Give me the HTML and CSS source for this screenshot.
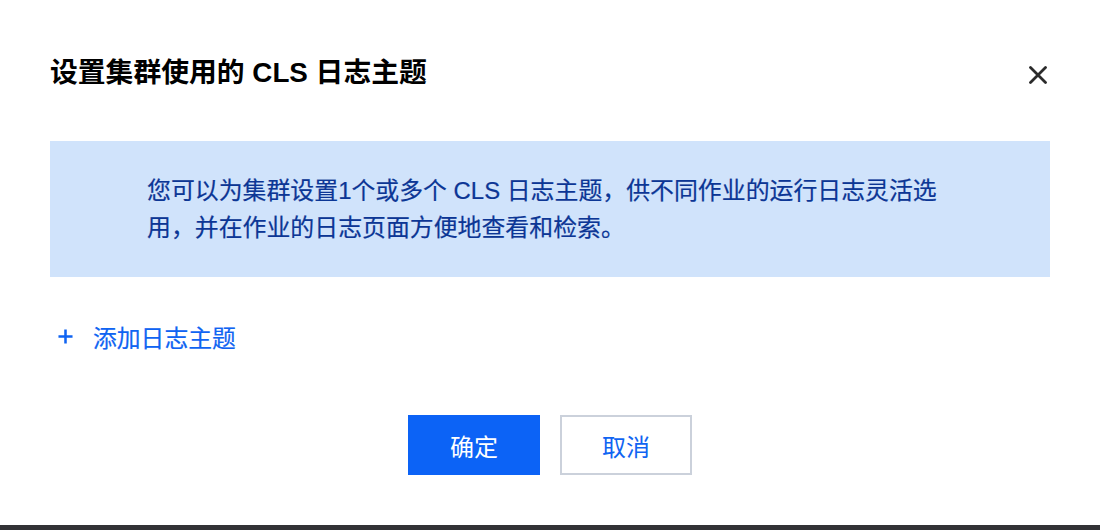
FILE: index.html
```html
<!DOCTYPE html>
<html lang="zh-CN">
<head>
<meta charset="utf-8">
<title>设置集群使用的 CLS 日志主题</title>
<link rel="stylesheet" href="styles.css">
</head>
<body>
<div class="page">
  <div class="dialog">
    <div class="dialog-header">
      <h1 class="dialog-title">设置集群使用的 CLS 日志主题</h1>
      <button class="close-btn" aria-label="关闭">
        <svg width="18" height="18" viewBox="0 0 18 18"><path d="M1.5 1.5 L16.5 16.5 M16.5 1.5 L1.5 16.5" stroke="#2b2b2b" stroke-width="2.8" stroke-linecap="round" fill="none"/></svg>
      </button>
    </div>
    <div class="info-box">
      <p class="info-text">您可以为集群设置1个或多个 CLS 日志主题，供不同作业的运行日志灵活选用，并在作业的日志页面方便地查看和检索。</p>
    </div>
    <a class="add-link" href="#">
      <svg class="plus" width="15" height="15" viewBox="0 0 16 16"><path d="M8 0.5 V15.5 M0.5 8 H15.5" stroke="currentColor" stroke-width="2.7" fill="none"/></svg>
      <span>添加日志主题</span>
    </a>
    <div class="dialog-footer">
      <button class="btn btn-primary">确定</button>
      <button class="btn btn-default">取消</button>
    </div>
  </div>
  <div class="bottom-bar"></div>
</div>
</body>
</html>
```
FILE: styles.css
```css
html, body {
  margin: 0;
  padding: 0;
  background: #ffffff;
}
body {
  font-family: "Liberation Sans", "Noto Sans CJK SC", sans-serif;
  color: #000;
}
.page {
  width: 1100px;
  height: 530px;
  display: flex;
  flex-direction: column;
}
.dialog {
  flex: 1;
  padding: 0 50px;
  display: flex;
  flex-direction: column;
}
.dialog-header {
  display: flex;
  justify-content: space-between;
  align-items: center;
  padding-top: 53px;
  height: 40px;
}
.dialog-title {
  margin: 0;
  font-size: 27.8px;
  line-height: 40px;
  font-weight: 700;
  color: #000;
}
.close-btn {
  border: none;
  background: none;
  padding: 0;
  width: 18px;
  height: 18px;
  margin-top: 4px;
  margin-right: 3px;
  display: flex;
  cursor: pointer;
}
.info-box {
  margin-top: 48px;
  background: #d0e3fb;
  height: 136px;
  box-sizing: border-box;
  padding: 31px 100px 31px 97px;
}
.info-text {
  margin: 0;
  font-size: 23.9px;
  line-height: 37px;
  color: #0c3695;
  -webkit-text-stroke: 0.2px #0c3695;
}
.add-link {
  margin-top: 41px;
  align-self: flex-start;
  display: flex;
  align-items: center;
  gap: 20px;
  padding-left: 8px;
  height: 36px;
  font-size: 23.8px;
  color: #1064f2;
  text-decoration: none;
  -webkit-text-stroke: 0.2px #1064f2;
}
.plus {
  width: 15px;
  height: 15px;
}
.dialog-footer {
  margin-top: 61px;
  display: flex;
  justify-content: center;
  gap: 20px;
}
.btn {
  width: 132px;
  height: 60px;
  box-sizing: border-box;
  font-family: "Liberation Sans", "Noto Sans CJK SC", sans-serif;
  font-size: 24px;
  cursor: pointer;
}
.btn-primary {
  background: #0c63f6;
  color: #ffffff;
  border: none;
}
.btn-default {
  background: #ffffff;
  color: #1064f2;
  border: 2px solid #cbd1db;
}
.bottom-bar {
  height: 5px;
  background: #323236;
}
```
